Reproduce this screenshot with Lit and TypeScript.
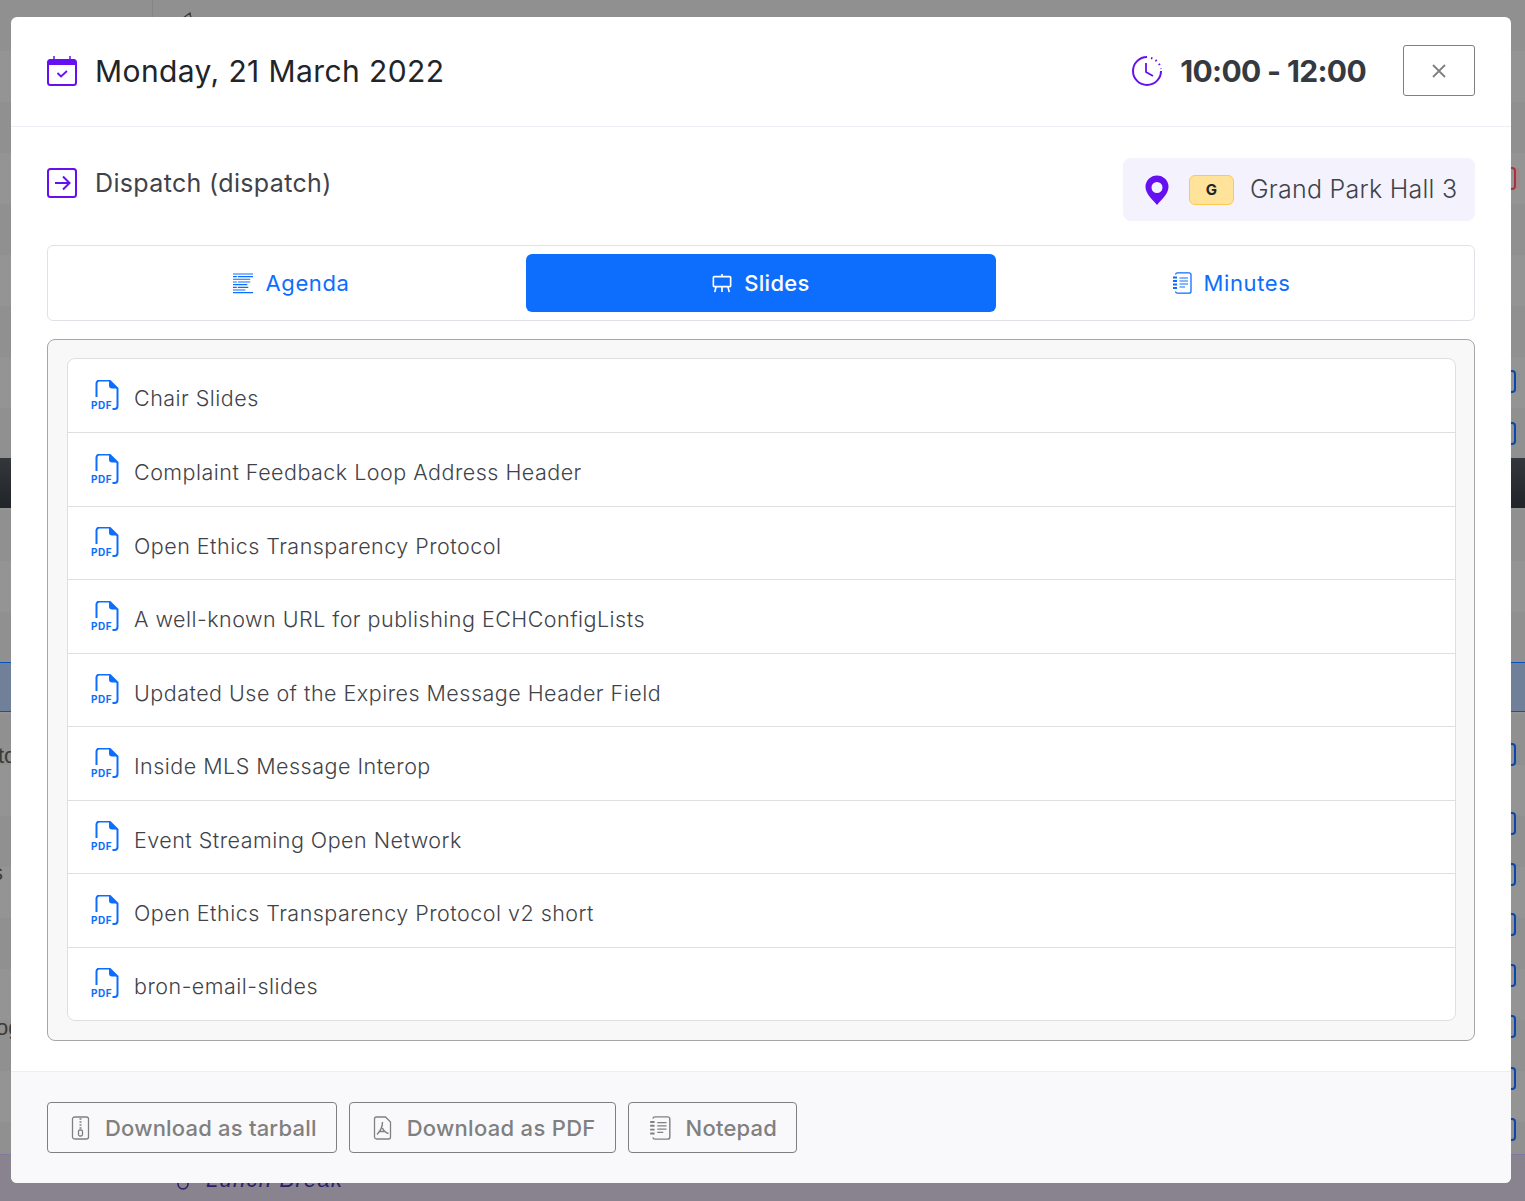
import { LitElement, html, css, svg } from "lit";
import { customElement } from "lit/decorators.js";

const pdfIcon = html`<svg class="pdf" viewBox="0 0 30 32" width="30" height="32" aria-hidden="true">
  <path d="M6.500 17V3.500A3 3 0 0 1 9.500 .5H19.500L27.500 8.500V26A3 3 0 0 1 24.500 29H22.500" fill="none" stroke="#0d6efd" stroke-width="2"/>
  <path d="M19 .5V5.500A3 3 0 0 0 22 8.500H27.500Z" fill="#0d6efd"/>
  <text x="1" y="28.500" font-size="10" font-weight="700" fill="#0d6efd" font-family="Inter, sans-serif">PDF</text>
</svg>`;

const ITEMS = [
  "Chair Slides",
  "Complaint Feedback Loop Address Header",
  "Open Ethics Transparency Protocol",
  "A well-known URL for publishing ECHConfigLists",
  "Updated Use of the Expires Message Header Field",
  "Inside MLS Message Interop",
  "Event Streaming Open Network",
  "Open Ethics Transparency Protocol v2 short",
  "bron-email-slides",
];

const notepad = svg`<path d="M3.500 2.500A2 2 0 0 1 5.500 .8H17A2 2 0 0 1 19 2.800V19.200A2 2 0 0 1 17 21.200H5.500A2 2 0 0 1 3.500 19.500" fill="none" stroke="currentColor" stroke-width="1.300"/>
<path d="M7.500 6H16M7.500 9H16M7.500 12H16M7.500 15H13" fill="none" stroke="currentColor" stroke-width="1.200"/>
<path d="M1 5.500H5M1 9H5M1 12.500H5M1 16H5" fill="none" stroke="currentColor" stroke-width="1.800"/>`;

@customElement("app-root")
export class AppRoot extends LitElement {
  static styles = css`
    :host { display: block; }
    .page {
      position: relative; width: 1525px; height: 1201px; overflow: hidden;
      background: repeating-linear-gradient(#909090 0, #909090 51px, #949494 51px, #949494 102px);
      font-family: Inter, "Open Sans", sans-serif; color: #212529;
    }
    .backdrop { position: absolute; inset: 0; }
    .vline { position: absolute; left: 152px; top: 0; bottom: 0; width: 1px; background: #858585; }
    .band { position: absolute; left: 0; right: 0; }
    .dark { top: 458px; height: 50px; background: linear-gradient(#33373b, #212529); }
    .blue { top: 662px; height: 50px; background: #6f8098; border-top: 1px solid #0a53be; border-bottom: 1px solid #0a53be; box-sizing: border-box; }
    .purple { top: 1154px; bottom: 0; background: #88838f; border-top: 1px solid #7f78a0; }
    .ghost { position: absolute; font-size: 22px; color: #3b3b3b; font-family: "Liberation Sans", sans-serif; }
    .g1 { left: -2px; top: 743px; }
    .g2 { left: -8px; top: 860px; }
    .g3 { left: -4px; top: 1015px; }
    .lunch { left: 206px; top: 1167px; font-style: italic; color: #2c1d66; letter-spacing: 1.250px; }
    .cup { position: absolute; left: 176px; top: 1176px; }
    .tri { position: absolute; left: 182px; top: 12px; }
    .mark {
      position: absolute; left: 1509px; width: 5px; height: 19px; border: 2px solid #0b47a8; border-left: 0;
      border-radius: 0 4px 4px 0; box-shadow: 5px 0 0 -1px rgba(120, 140, 170, .22);
    }
    .mark.red { border-color: #a8323f; box-shadow: 5px 0 0 -1px rgba(200, 110, 120, .3); }

    .wrap { position: relative; padding: 17px 14px 18px 11px; display: flex; }
    .modal {
      width: 1500px; height: 1166px; background: #fff; border-radius: 6px; overflow: hidden;
      display: flex; flex-direction: column; box-sizing: border-box;
    }
    .head {
      height: 110px; box-sizing: border-box; flex: none; padding: 0 36px 2px; display: flex; align-items: center;
      border-bottom: 1px solid #eeeef6;
    }
    .date { font-size: 30px; letter-spacing: .4px; margin-left: 18px; flex: 1; white-space: nowrap; }
    .time { font-size: 30px; font-weight: 700; color: #343a40; margin: 0 37px 0 17px; letter-spacing: -.65px; white-space: nowrap; }
    .close {
      width: 72px; height: 51px; box-sizing: border-box; border: 1px solid #7f7f7f; border-radius: 3px;
      display: flex; align-items: center; justify-content: center; background: #fff;
    }
    .body { flex: 1; padding: 31px 36px 30px; display: flex; flex-direction: column; }
    .top { display: flex; justify-content: space-between; height: 87px; flex: none; }
    .session { display: flex; align-items: center; height: 50px; font-size: 25px; letter-spacing: .35px; color: #3f4349; }
    .session span { margin-left: 18px; }
    .place {
      height: 63px; width: 352px; box-sizing: border-box; background: #f4f2fd; border-radius: 8px;
      display: flex; align-items: center; padding-left: 22px;
    }
    .badge {
      width: 45px; height: 30px; box-sizing: border-box; margin-left: 20px; border: 1px solid #ffc94d; border-radius: 6px;
      background: #ffe39b; color: #212529; font-weight: 700; font-size: 15px;
      display: flex; align-items: center; justify-content: center;
    }
    .hall { margin-left: 16px; padding-bottom: 2px; font-size: 25px; font-weight: 300; letter-spacing: .25px; color: #3f4349; white-space: nowrap; }
    .tabs {
      height: 76px; flex: none; box-sizing: border-box; border: 1px solid #dee2e6; border-radius: 6px;
      padding: 8px; display: grid; grid-template-columns: 470px 470px 470px;
    }
    .tab {
      display: flex; align-items: center; justify-content: center; gap: 12px; border-radius: 6px;
      font-size: 22px; font-weight: 400; letter-spacing: .6px; color: #0d6efd;
    }
    .tab.on { background: #0d6efd; color: #fff; font-weight: 500; letter-spacing: .3px; }
    .panel {
      margin-top: 18px; height: 702px; flex: none; box-sizing: border-box;
      border: 1px solid #a6a6a6; border-radius: 8px; background: #f8f8f8; padding: 18px 18px 19px 19px;
    }
    .list { height: 663px; box-sizing: border-box; border: 1px solid #dfdfdf; border-radius: 8px; background: #fff; display: flex; flex-direction: column; }
    .row {
      flex: none; height: 73.5px; display: flex; align-items: center; padding-left: 22px; box-sizing: border-box;
      border-top: 1px solid #dfdfdf; font-size: 21.500px; font-weight: 300; letter-spacing: .48px; color: #3f4349;
    }
    .row:first-child { border-top: 0; height: 73.4px; }
    .row:last-child { flex: 1; height: auto; }
    .row span { margin: 5px 0 0 14px; }
    .foot {
      height: 112px; flex: none; box-sizing: border-box; background: #f9f9fc; border-top: 1px solid #ededf3;
      padding: 30px 36px; display: flex; gap: 12px;
    }
    .btn {
      height: 51px; box-sizing: border-box; border: 1px solid #7f7f7f; border-radius: 4px; color: #808080;
      display: flex; align-items: center; gap: 15px; padding: 0 19px 0 20px; font-size: 22px; font-weight: 500;
      letter-spacing: .2px; white-space: nowrap;
    }
    .btn.wide { letter-spacing: .3px; }
    .inset { margin-left: 3px; }
    .pdf { flex: none; }
    svg { display: block; flex: none; }
  `;

  render() {
    const tops = [370, 422, 743, 812, 863, 913, 964, 1015, 1067, 1118];
    return html`<div class="page">
      <div class="backdrop">
        <div class="vline"></div>
        <div class="band dark"></div>
        <div class="band blue"></div>
        <div class="band purple"></div>
        <svg class="tri" width="10" height="6" viewBox="0 0 10 6"><path d="M8 1L1 6H9Z" fill="none" stroke="#3b3b3b" stroke-width="1.300"/></svg>
        <div class="ghost g1">to</div>
        <div class="ghost g2">s</div>
        <div class="ghost g3">og</div>
        <svg class="cup" width="14" height="14" viewBox="0 0 14 14"><path d="M2 1V8A5 5 0 0 0 12 8V1" fill="none" stroke="#2c1d66" stroke-width="1.500"/></svg>
        <div class="ghost lunch">Lunch Break</div>
        <div class="mark red" style="top:167px"></div>
        ${tops.map((t) => html`<div class="mark" style="top:${t}px"></div>`)}
      </div>
      <div class="wrap">
        <div class="modal">
          <div class="head">
            <svg viewBox="0 0 30 32" width="30" height="32" style="color:#6610f2">
              <rect x="1" y="5" width="28" height="25" rx="2.500" fill="none" stroke="currentColor" stroke-width="2"/>
              <path d="M1 8A3.500 3.500 0 0 1 4 4H26A3.500 3.500 0 0 1 29 8V10H1Z" fill="currentColor"/>
              <path d="M7 1V5M23 1V5" stroke="currentColor" stroke-width="1.500"/>
              <path d="M10.500 18L14 21.500L20 16" fill="none" stroke="currentColor" stroke-width="1.800"/>
            </svg>
            <div class="date">Monday, 21 March 2022</div>
            <svg viewBox="0 0 32 32" width="32" height="32" fill="none" stroke="#6610f2" stroke-width="2">
              <path d="M16 2A14 14 0 1 0 30 16" />
              <path d="M20 3A14 14 0 0 1 30 14" stroke-dasharray="1.500 3.500"/>
              <path d="M15 8V17L22 21" stroke-width="1.800"/>
            </svg>
            <div class="time">10:00 - 12:00</div>
            <div class="close">
              <svg viewBox="0 0 16 16" width="16" height="16"><path d="M2 2L14 14M14 2L2 14" stroke="#808080" stroke-width="1.800"/></svg>
            </div>
          </div>
          <div class="body">
            <div class="top">
              <div class="session">
                <svg viewBox="0 0 30 30" width="30" height="30" fill="none" stroke="#6610f2" stroke-width="2">
                  <rect x="1" y="1" width="28" height="28" rx="2.500"/>
                  <path d="M8 15H22M16 8.500L22.500 15L16 21.500"/>
                </svg>
                <span>Dispatch (dispatch)</span>
              </div>
              <div class="place">
                <svg viewBox="0 0 24 30" width="24" height="30">
                  <path fill-rule="evenodd" fill="#6610f2" d="M12 .5A11.500 11.500 0 0 1 23.500 12C23.500 19 16 25 12 30C8 25 .5 19 .5 12A11.500 11.500 0 0 1 12 .5ZM12 7A5.500 5.500 0 1 0 12 18A5.500 5.500 0 1 0 12 7Z"/>
                </svg>
                <div class="badge">G</div>
                <div class="hall">Grand Park Hall 3</div>
              </div>
            </div>
            <div class="tabs">
              <div class="tab">
                <svg viewBox="0 0 22 22" width="21" height="21" fill="none" stroke="currentColor" stroke-width="1.200">
                  <path d="M0 1H21M0 3.800H4M5 3.800H21M0 6.600H18M0 9.400H4M5 9.400H18M0 12.200H15M0 15H4M5 15H16M0 17.800H13M0 20.600H21"/>
                </svg>
                <span>Agenda</span>
              </div>
              <div class="tab on">
                <svg viewBox="0 0 22 22" width="20" height="20" fill="none" stroke="currentColor" stroke-width="1.800">
                  <rect x="1.500" y="4" width="19" height="11" rx="1"/>
                  <path d="M11 1V4M4.500 15L3 21M17.500 15L19 21M11 15V21"/>
                </svg>
                <span>Slides</span>
              </div>
              <div class="tab">
                <svg viewBox="0 0 20 22" width="20" height="22">${notepad}</svg>
                <span>Minutes</span>
              </div>
            </div>
            <div class="panel">
              <div class="list">
                ${ITEMS.map((t) => html`<div class="row">${pdfIcon}<span>${t}</span></div>`)}
              </div>
            </div>
          </div>
          <div class="foot">
            <div class="btn">
              <svg class="inset" viewBox="0 0 18 24" width="19" height="24" fill="none" stroke="currentColor" stroke-width="1.300">
                <rect x="1" y="1" width="16" height="22" rx="2"/>
                <path d="M8 3H10M8 6H10M8 9H10M8 12H10" stroke-width="1.600"/>
                <rect x="7" y="14" width="4" height="6" rx="1.500"/>
              </svg>
              <span>Download as tarball</span>
            </div>
            <div class="btn wide">
              <svg class="inset" viewBox="0 0 18 24" width="19" height="24" fill="none" stroke="currentColor" stroke-width="1.300">
                <path d="M3 1H12L17 6V21A2 2 0 0 1 15 23H3A2 2 0 0 1 1 21V3A2 2 0 0 1 3 1Z"/>
                <path d="M9 6C9 12 7 15 3.500 18.500M9 12C10 15 12 16.500 15 17.500M5 15.500H12" stroke-width="1.400"/>
              </svg>
              <span>Download as PDF</span>
            </div>
            <div class="btn">
              <svg viewBox="0 0 20 22" width="22" height="24">${notepad}</svg>
              <span>Notepad</span>
            </div>
          </div>
        </div>
      </div>
    </div>`;
  }
}
